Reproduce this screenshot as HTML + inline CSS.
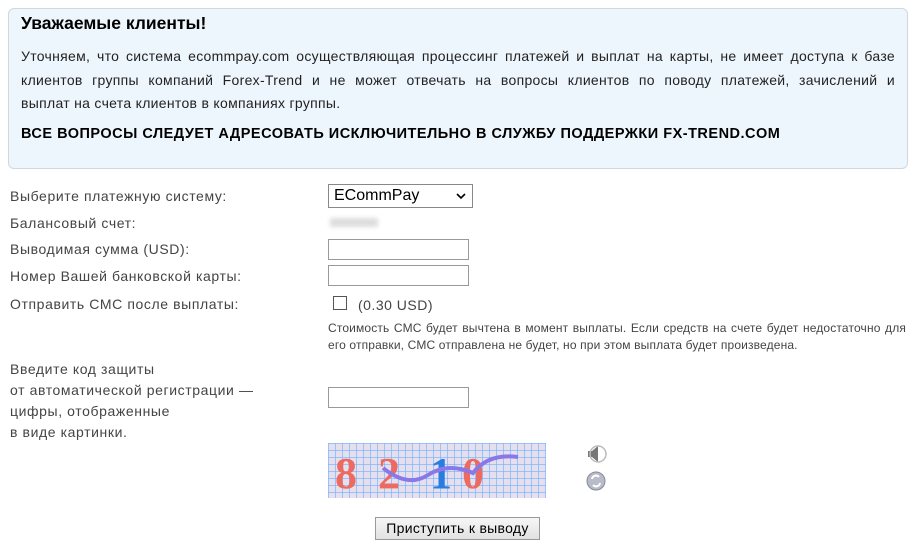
<!DOCTYPE html>
<html><head><meta charset="utf-8"><style>
body{margin:0;width:916px;height:549px;background:#fff;font-family:"Liberation Sans","DejaVu Sans",sans-serif;color:#333;position:relative;overflow:hidden}
.box{position:absolute;left:8px;top:8px;width:900px;height:161px;background:#eef6fd;border:1px solid #cfd8e0;border-radius:6px;box-sizing:border-box}
.t{position:absolute;left:21px;top:13px;font-weight:bold;font-size:17.5px;color:#000}
.p{position:absolute;left:21px;top:45px;width:874px;font-size:14px;letter-spacing:0.3px;line-height:23.5px;color:#222}
.p div{text-align:justify;text-align-last:justify;white-space:nowrap}
.p div.last{text-align-last:left}
.b{position:absolute;left:21px;top:126px;font-size:14.5px;letter-spacing:0.5px;font-weight:bold;color:#000}
.l{position:absolute;left:10px;font-size:14px;letter-spacing:0.6px;color:#444}
.in{position:absolute;left:328px;width:141px;height:21px;border:1px solid #999;box-sizing:border-box;background:#fff}
.n{position:absolute;left:328px;width:578px;font-size:12px;letter-spacing:0.15px;color:#444;white-space:nowrap}
</style></head><body>
<div class="box"></div>
<div class="t">Уважаемые клиенты!</div>
<div class="p"><div>Уточняем, что система ecommpay.com осуществляющая процессинг платежей и выплат на карты, не имеет доступа к базе</div><div>клиентов группы компаний Forex-Trend и не может отвечать на вопросы клиентов по поводу платежей, зачислений и</div><div class="last">выплат на счета клиентов в компаниях группы.</div></div>
<div class="b">ВСЕ ВОПРОСЫ СЛЕДУЕТ АДРЕСОВАТЬ ИСКЛЮЧИТЕЛЬНО В СЛУЖБУ ПОДДЕРЖКИ FX-TREND.COM</div>

<div class="l" style="top:188px">Выберите платежную систему:</div>
<div style="position:absolute;left:328px;top:184px;width:145px;height:24px;border:1px solid #888;box-sizing:border-box;font-size:16px;color:#000;padding:2px 0 0 5px;background:#fff">ECommPay<svg style="position:absolute;right:6px;top:8px" width="10" height="7"><path d="M1 1 L5 5 L9 1" stroke="#000" stroke-width="1.6" fill="none"/></svg></div>
<div class="l" style="top:215px">Балансовый счет:</div>
<div style="position:absolute;left:330px;top:218px;width:48px;height:9px;background:#ddd;filter:blur(2px)"></div>
<div class="l" style="top:241px">Выводимая сумма (USD):</div>
<div class="in" style="top:239px"></div>
<div class="l" style="top:268px">Номер Вашей банковской карты:</div>
<div class="in" style="top:265px"></div>
<div class="l" style="top:296px">Отправить СМС после выплаты:</div>
<div style="position:absolute;left:333px;top:296px;width:14px;height:14px;border:1px solid #555;box-sizing:border-box"></div>
<div style="position:absolute;left:358px;top:297px;font-size:14px;letter-spacing:0.5px;color:#444">(0.30 USD)</div>
<div class="n" style="top:321px;text-align:justify;text-align-last:justify">Стоимость СМС будет вычтена в момент выплаты. Если средств на счете будет недостаточно для</div>
<div class="n" style="top:338px">его отправки, СМС отправлена не будет, но при этом выплата будет произведена.</div>
<div class="l" style="top:359px;line-height:21px">Введите код защиты<br>от автоматической регистрации —<br>цифры, отображенные<br>в виде картинки.</div>
<div class="in" style="top:387px"></div>
<div style="position:absolute;left:328px;top:443px;width:218px;height:55px;background-color:#e6e0ee;background-image:linear-gradient(90deg,rgba(120,180,255,.7) 1px,transparent 1px),linear-gradient(rgba(120,180,255,.7) 1px,transparent 1px);background-size:7px 7px"></div>
<div style="position:absolute;left:335px;top:448px;font:bold 44px 'Liberation Serif',serif;color:#ec6a60">8</div>
<div style="position:absolute;left:378px;top:448px;font:bold 44px 'Liberation Serif',serif;color:#ec6a60">2</div>
<div style="position:absolute;left:430px;top:448px;font:bold 44px 'Liberation Serif',serif;color:#2a7de0">1</div>
<div style="position:absolute;left:462px;top:448px;font:bold 44px 'Liberation Serif',serif;color:#ec6a60">0</div>
<svg style="position:absolute;left:328px;top:443px" width="218" height="55"><path d="M55 25 Q80 45 100 32 T145 30 Q160 10 190 14" stroke="#8a78e8" stroke-width="4" fill="none"/></svg>
<svg style="position:absolute;left:584px;top:444px" width="26" height="48">
<path d="M4 7 h4 l6-5 v16 l-6-5 h-4z" fill="#777"/><circle cx="14" cy="10" r="8" fill="none" stroke="#bbb" stroke-width="1.5"/>
<circle cx="12" cy="37" r="9" fill="#b8bcc8" stroke="#889" stroke-width="1"/><path d="M8 35 a4 4 0 0 1 7-2 M16 39 a4 4 0 0 1 -7 2" stroke="#fff" stroke-width="2" fill="none"/>
</svg>
<div style="position:absolute;left:375px;top:517px;width:165px;height:23px;border:1px solid #999;box-sizing:border-box;background:linear-gradient(#f6f6f6,#e2e2e2);font-size:14px;letter-spacing:0.3px;color:#000;text-align:center;line-height:21px">Приступить к выводу</div>
</body></html>
